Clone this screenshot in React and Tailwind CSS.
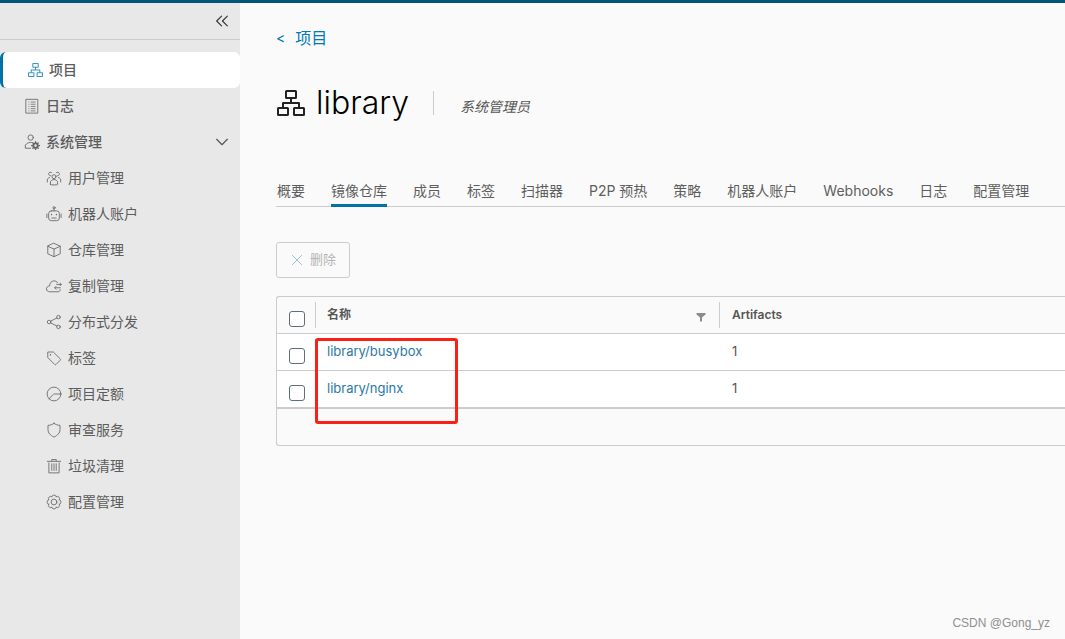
import { useState } from "react";
import clsx from "clsx";

function Icon({ className, children, viewBox = "0 0 36 36" }) {
  return (
    <svg
      viewBox={viewBox}
      fill="none"
      stroke="currentColor"
      strokeWidth="2"
      strokeLinejoin="round"
      strokeLinecap="round"
      className={clsx("shrink-0", className)}
      aria-hidden="true"
    >
      {children}
    </svg>
  );
}

function ProjectIcon({ className }) {
  return (
    <Icon className={className} viewBox="0 0 28 26">
      <rect x="9" y="1" width="10" height="7" rx="0.5" />
      <rect x="1" y="18" width="10" height="7" rx="0.5" />
      <rect x="17" y="18" width="10" height="7" rx="0.5" />
      <path d="M14 8v5M6 17v-4h16v4" />
    </Icon>
  );
}

function LogIcon({ className }) {
  return (
    <Icon className={className}>
      <rect x="5" y="3" width="26" height="31" strokeWidth="2.2" />
      <path d="M10 9h2M10 14h2M10 19h2M10 24h2M10 29h2" strokeLinecap="butt" />
      <path d="M15 9h11M15 14h11M15 19h11M15 24h11M15 29h11" strokeLinecap="butt" />
    </Icon>
  );
}

function AdminIcon({ className }) {
  return (
    <Icon className={className}>
      <circle cx="15" cy="8" r="6" />
      <path d="M15 32H3v-7c3-4 7-6 12-6 1.500 0 3 .2 4 .5" />
      <circle cx="26" cy="26" r="5" strokeWidth="4" />
      <path
        d="M26 17v3M26 32v3M17 26h3M32 26h3M20 20l2 2M30 30l2 2M32 20l-2 2M22 30l-2 2"
        strokeWidth="3"
      />
    </Icon>
  );
}

function UsersIcon({ className }) {
  return (
    <Icon className={className}>
      <circle cx="18" cy="15" r="4.500" />
      <path d="M10 32v-6c2-3 5-4.500 8-4.500s6 1.500 8 4.500v6c0 1-.5 1.500-1.500 1.500h-13c-1 0-1.500-.5-1.500-1.500z" />
      <path d="M11 13a4.200 4.200 0 1 1 1.500-7.500M25 13a4.200 4.200 0 1 0-1.500-7.500" />
      <path d="M8 17c-2 .5-4 2-5 3.500V27M28 17c2 .5 4 2 5 3.500V27" />
    </Icon>
  );
}

function RobotIcon({ className }) {
  return (
    <Icon className={className}>
      <circle cx="18" cy="4" r="2.500" />
      <path d="M18 7v4M12 11h12a6 6 0 0 1 6 6v10a6 6 0 0 1-6 6H12a6 6 0 0 1-6-6V17a6 6 0 0 1 6-6z" />
      <path d="M2 18v8M34 18v8M13 27h10" />
      <path d="M12.500 19v.5M23.500 19v.5" strokeWidth="3" />
    </Icon>
  );
}

function BoxIcon({ className }) {
  return (
    <Icon className={className}>
      <path d="M18 3l14 6.500v17L18 33 4 26.500v-17z" />
      <path d="M4 9.500L18 16l14-6.500M18 16v17" />
    </Icon>
  );
}

function CloudIcon({ className }) {
  return (
    <Icon className={className}>
      <path d="M32 26c0 3-2 5-5 5H8.500c-4.500 0-7.500-2.500-7.500-6.500 0-3.500 3-6.500 7-6.500C8.500 11 12.500 6.500 18 6.500c3.500 0 6.500 1.500 8 4" />
      <path d="M24 14.500h10M31.500 11.500l3 3-3 3M32 22H20M22.500 19l-3 3 3 3" />
    </Icon>
  );
}

function ShareIcon({ className }) {
  return (
    <Icon className={className}>
      <circle cx="7" cy="18" r="4" />
      <circle cx="28" cy="7" r="4" />
      <circle cx="28" cy="29" r="4" />
      <path d="M10.500 16L24.500 9M10.500 20l14 7" />
    </Icon>
  );
}

function TagIcon({ className }) {
  return (
    <Icon className={className}>
      <path d="M4 5.500v11.500l15.500 15.500c1 1 2 1 3 0l9.500-9.500c1-1 1-2 0-3L16.500 4.500H5z" />
      <path d="M10 10.500v.5" strokeWidth="3" />
    </Icon>
  );
}

function QuotaIcon({ className }) {
  return (
    <Icon className={className}>
      <circle cx="18" cy="18" r="15.500" />
      <path d="M7 29l8-9c1-1.200 2-2 4-2h14.500" />
    </Icon>
  );
}

function ShieldIcon({ className }) {
  return (
    <Icon className={className}>
      <path d="M18 3c4 3 8.500 4.500 13.500 4.500V17c0 8-5.500 13-13.500 17C10 30 4.500 25 4.500 17V7.500C9.500 7.500 14 6 18 3z" />
    </Icon>
  );
}

function TrashIcon({ className }) {
  return (
    <Icon className={className}>
      <path d="M3 7.500h30M13 7V3.500h10V7M6.500 11v22.500h23V11M13 13v15M18 13v15M23 13v15" />
    </Icon>
  );
}

// rotated copies of one lobe make the gear outline
function CogIcon({ className }) {
  return (
    <Icon className={className}>
      {[0, 45, 90, 135, 180, 225, 270, 315].map((angle) => (
        <path
          key={angle}
          d="M13 6.200C13.500 3.500 15 2.500 18 2.500S22.500 3.500 23 6.200"
          transform={`rotate(${angle} 18 18)`}
        />
      ))}
      <circle cx="18" cy="18" r="6.500" />
    </Icon>
  );
}

const adminItems = [
  { label: "用户管理", icon: UsersIcon },
  { label: "机器人账户", icon: RobotIcon },
  { label: "仓库管理", icon: BoxIcon },
  { label: "复制管理", icon: CloudIcon },
  { label: "分布式分发", icon: ShareIcon },
  { label: "标签", icon: TagIcon },
  { label: "项目定额", icon: QuotaIcon },
  { label: "审查服务", icon: ShieldIcon },
  { label: "垃圾清理", icon: TrashIcon },
  { label: "配置管理", icon: CogIcon },
];

const tabs = [
  "概要",
  "镜像仓库",
  "成员",
  "标签",
  "扫描器",
  "P2P 预热",
  "策略",
  "机器人账户",
  "Webhooks",
  "日志",
  "配置管理",
];

const repositories = [
  { name: "library/busybox", artifacts: 1 },
  { name: "library/nginx", artifacts: 1 },
];

function Sidebar() {
  const [open, setOpen] = useState(true);

  return (
    <aside className="w-60 shrink-0 bg-[#e8e8e8] text-sm text-[#5c5c5c]">
      <div className="flex h-[37px] items-center justify-end border-b border-[#ccc] pr-2.5">
        <button type="button" aria-label="收起" className="text-[#333]">
          <Icon className="size-4">
            <path d="M17 7L6 18l11 11M30 7L19 18l11 11" strokeWidth="2.500" />
          </Icon>
        </button>
      </div>

      <nav className="pt-3">
        <a
          href="#projects"
          className="flex h-9 items-center gap-[6px] rounded-md border-l-[3px] border-[#0072a3] bg-white pl-[25px] font-medium"
        >
          <ProjectIcon className="h-[14px] w-[15px] text-[#3a96c0]" />
          项目
        </a>
        <a href="#logs" className="flex h-9 items-center gap-[6px] pl-6 font-medium">
          <LogIcon className="size-4 text-[#777]" />
          日志
        </a>
        <button
          type="button"
          onClick={() => setOpen(!open)}
          aria-expanded={open}
          className="flex h-9 w-full items-center gap-[6px] pr-2.5 pl-6 font-medium"
        >
          <AdminIcon className="size-4 text-[#666]" />
          系统管理
          <Icon className="ml-auto size-4">
            <path d="M6 12l12 12 12-12" strokeWidth="3" />
          </Icon>
        </button>

        {open &&
          adminItems.map(({ label, icon: ItemIcon }) => (
            <a key={label} href="#admin" className="flex h-9 items-center gap-[6px] pl-[46px]">
              <ItemIcon className="size-4 text-[#6a6a6a]" />
              {label}
            </a>
          ))}
      </nav>
    </aside>
  );
}

function Tabs() {
  const [active, setActive] = useState("镜像仓库");

  return (
    <div role="tablist" className="flex h-8 gap-[26px] border-b border-[#ccc] pl-px">
      {tabs.map((tab) => (
        <button
          key={tab}
          type="button"
          role="tab"
          aria-selected={tab === active}
          onClick={() => setActive(tab)}
          className={clsx(
            "-mb-px h-8 shrink-0 border-b-[3px] pt-0.5 text-sm whitespace-nowrap text-[#5e5e5e]",
            tab === active ? "border-[#0072a3]" : "border-transparent"
          )}
        >
          {tab}
        </button>
      ))}
    </div>
  );
}

function Checkbox({ label }) {
  return (
    <input
      type="checkbox"
      aria-label={label}
      className="mt-[14px] ml-3 block size-4 appearance-none rounded-[3px] border border-[#5f6f79] bg-white checked:bg-[#0072a3]"
    />
  );
}

function RepositoryTable() {
  return (
    <div className="relative rounded-l-[3px] border border-r-0 border-[#ccc]">
      <table className="w-full table-fixed border-separate border-spacing-0 text-left text-[13px] text-[#565656]">
        <colgroup>
          <col className="w-[38px]" />
          <col className="w-[404px]" />
          <col />
        </colgroup>
        <thead>
          <tr className="h-[37px]">
            <th className="border-b border-[#ccc] p-0 align-top">
              <Checkbox label="全选" />
            </th>
            <th className="border-b border-[#ccc] p-0 text-xs font-semibold">
              <div className="flex h-[26px] items-center justify-between border-l border-[#ccc] pr-[13px] pl-[11px]">
                名称
                <button type="button" aria-label="筛选" className="mt-1 text-[#8c8c8c]">
                  <svg viewBox="0 0 10 10" className="size-[10px]" fill="currentColor">
                    <path d="M0.500 1h9v1.500L6 5.500v4H4v-4L0.500 2.500z" />
                  </svg>
                </button>
              </div>
            </th>
            <th className="border-b border-[#ccc] p-0 text-xs font-semibold">
              <div className="flex h-[26px] items-center border-l border-[#ccc] pl-3">Artifacts</div>
            </th>
          </tr>
        </thead>
        <tbody className="bg-white">
          {repositories.map((repo) => (
            <tr key={repo.name} className="h-[37px]">
              <td className="border-b border-[#ccc] p-0 align-top">
                <Checkbox label={repo.name} />
              </td>
              <td className="border-b border-[#ccc] p-0">
                <div className="flex h-[26px] items-center border-l border-[#ccc] pl-[11px]">
                  <a href="#repository" className="text-[#2a78a5]">
                    {repo.name}
                  </a>
                </div>
              </td>
              <td className="border-b border-[#ccc] py-0 pr-0 pl-[13px]">{repo.artifacts}</td>
            </tr>
          ))}
        </tbody>
      </table>
      <div className="h-[37px] border-t border-[#ccc]" />

      {/* highlight around the repository names */}
      <div className="pointer-events-none absolute top-[41px] left-[38px] h-[86px] w-[143px] rounded-[3px] border-[3px] border-[#fb2016]" />
    </div>
  );
}

export default function App() {
  return (
    <div className="relative flex min-h-screen overflow-hidden border-t-[3px] border-[#00567a] bg-[#fafafa] font-['Inter','Noto_Sans_CJK_SC',sans-serif]">
      <Sidebar />

      <main className="min-w-0 flex-1 pt-6 pl-9">
        <a href="#projects" className="flex h-[22px] items-center gap-2.5 text-base text-[#0079b8]">
          <span className="text-sm">&lt;</span>
          项目
        </a>

        <div className="mt-[30px] flex h-12 items-center">
          <ProjectIcon className="h-[26px] w-[30px] text-[#222]" />
          <h1 className="ml-2.5 text-[32px] font-light text-black">library</h1>
          <span className="ml-6 h-6 w-px bg-[#ccc]" />
          <span className="mt-2 ml-[26px] text-sm text-[#565656] italic">系统管理员</span>
        </div>

        <div className="mt-12">
          <Tabs />
        </div>

        <button
          type="button"
          disabled
          className="mt-[35px] mb-[18px] flex h-9 items-center gap-[6px] rounded-[3px] border border-[#ccc] px-[13px] text-[13px] text-[#b5b5b5]"
        >
          <Icon className="size-3.5 text-[#94c3da]">
            <path d="M6 6l24 24M30 6L6 30" strokeWidth="2.500" />
          </Icon>
          删除
        </button>

        <RepositoryTable />
      </main>

      <span className="absolute right-[15px] bottom-2 font-['Liberation_Sans',sans-serif] text-xs text-[#8f8f8f]">
        CSDN @Gong_yz
      </span>
    </div>
  );
}
